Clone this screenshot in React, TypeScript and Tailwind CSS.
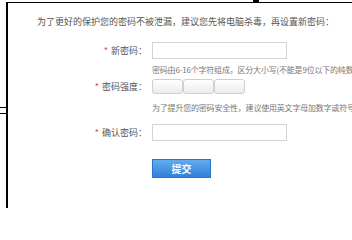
import React from 'react'

const font = { fontFamily: '"Noto Sans CJK SC", "Noto Sans", sans-serif' }

function Label({ text }: { text: string }) {
  return (
    <div className="flex w-[144px] shrink-0 items-center justify-end pr-[5px] text-[9px] text-[#555]">
      <span className="mr-[3px] text-[#e0474c]">*</span>
      {text}
    </div>
  )
}

function TextInput() {
  return <div className="h-[17px] w-[135px] border border-[#d4d4d4] bg-white" />
}

function StrengthBar() {
  return (
    <div className="flex">
      {[0, 1, 2].map((i) => (
        <div
          key={i}
          className="h-[15px] w-[31px] rounded-[3px] border border-[#cfcfcf] bg-gradient-to-b from-white to-[#ececec]"
        />
      ))}
    </div>
  )
}

export default function App() {
  return (
    <div className="flex h-[208px] w-[352px] overflow-hidden bg-white" style={font}>
      <div className="w-[6px] shrink-0 pt-[107px]">
        <div className="h-[7px] border-y border-black" />
      </div>
      <div className="relative mt-[2px] h-[206px] flex-1 border-l-2 border-t border-black">
        <div className="absolute -top-[3px] left-[245px] h-[3px] w-[6px] bg-black" />
        <div className="whitespace-nowrap pl-[29px] pt-[13px] text-[9px] leading-[12px] text-[#555]">
          为了更好的保护您的密码不被泄漏，建议您先将电脑杀毒，再设置新密码：
        </div>

        <div className="mt-[14px] flex items-center">
          <Label text="新密码：" />
          <TextInput />
        </div>
        <div className="mt-[5px] whitespace-nowrap pl-[144px] text-[8px] leading-[12px] tracking-[-0.2px] text-[#777]">
          密码由6-16个字符组成，区分大小写(不能是9位以下的纯数字)
        </div>

        <div className="mt-[3px] flex items-center">
          <Label text="密码强度：" />
          <StrengthBar />
        </div>
        <div className="mt-[8px] whitespace-nowrap pl-[144px] text-[8px] leading-[12px] tracking-[-0.2px] text-[#777]">
          为了提升您的密码安全性，建议使用英文字母加数字或符号的混合密码
        </div>

        <div className="mt-[10px] flex items-center">
          <Label text="确认密码：" />
          <TextInput />
        </div>

        <div className="mt-[18px] pl-[144px]">
          <button className="flex h-[19px] w-[59px] items-center justify-center border border-[#2a76c6] bg-gradient-to-b from-[#63aaf0] to-[#2f80d8] text-[10px] font-bold text-white">
            提交
          </button>
        </div>
      </div>
    </div>
  )
}
